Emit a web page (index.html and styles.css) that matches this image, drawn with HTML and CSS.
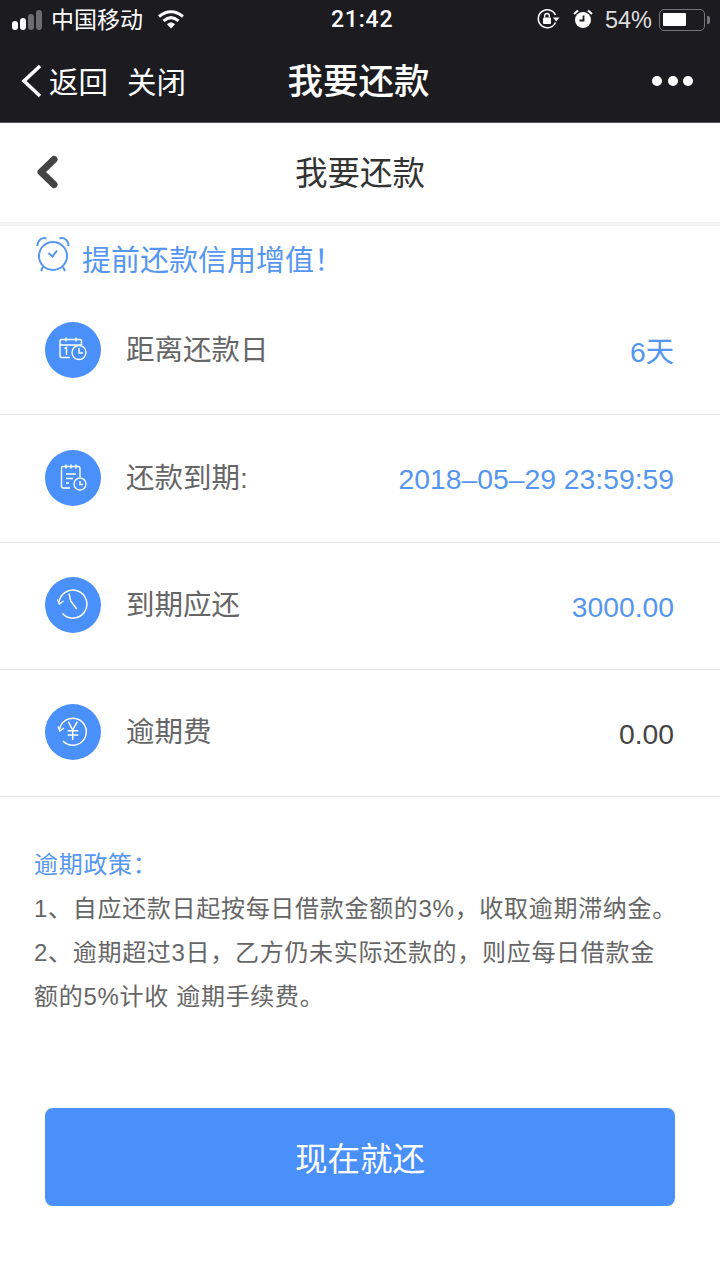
FILE: index.html
```html
<!DOCTYPE html>
<html lang="zh-CN">
<head>
    <meta charset="UTF-8">
    <meta name="viewport" content="width=device-width, initial-scale=1.0">
    <title>我要还款</title>
    <link rel="stylesheet" href="styles.css">
</head>
<body>
    <div class="top-bar">
        <div class="status-bar">
            <div class="status-left">
                <div class="signal">
                    <span class="dot on s1"></span>
                    <span class="dot on s2"></span>
                    <span class="dot s3"></span>
                    <span class="dot s4"></span>
                </div>
                <span class="carrier">中国移动</span>
                <svg class="wifi" width="28" height="20" viewBox="0 0 28 20">
                    <path d="M2 7.5C9.500 1 18.500 1 26 7.500" fill="none" stroke="#fff" stroke-width="3"/>
                    <path d="M6.500 11.800C11.500 7.500 16.500 7.500 21.500 11.800" fill="none" stroke="#fff" stroke-width="3"/>
                    <path d="M10 15.200C12.500 13 15.500 13 18 15.200L14 19.500Z" fill="#fff"/>
                </svg>
            </div>
            <span class="clock">21:42</span>
            <div class="status-right">
                <svg class="lock" width="24" height="22" viewBox="0 0 24 22">
                    <path d="M19.500 14.500A9 9 0 1 1 19.500 7" fill="none" stroke="#fff" stroke-width="1.600"/>
                    <path d="M17 9.500L23.500 9.500L20.200 13.500Z" fill="#fff"/>
                    <rect x="7" y="9.500" width="8" height="6.500" rx="1" fill="#fff"/>
                    <path d="M8.700 9.500V7.800A2.300 2.300 0 0 1 13.300 7.800V9.500" fill="none" stroke="#fff" stroke-width="1.300"/>
                </svg>
                <svg class="alarm" width="20" height="20" viewBox="0 0 20 20">
                    <circle cx="10" cy="11" r="8" fill="#fff"/>
                    <path d="M10.500 6.500V11.500H6.500" fill="none" stroke="#1b1b20" stroke-width="1.800"/>
                    <path d="M1 5L5 1.500M19 5L15 1.500" stroke="#fff" stroke-width="2.200"/>
                </svg>
                <span class="battery-text">54%</span>
                <div class="battery"><span class="battery-fill"></span></div>
                <span class="battery-cap"></span>
            </div>
        </div>
        <div class="nav-bar">
            <div class="nav-left">
                <svg width="24" height="34" viewBox="0 0 24 34">
                    <path d="M20 2L4 17L20 32" fill="none" stroke="#fff" stroke-width="3.600"/>
                </svg>
                <span class="nav-link">返回</span>
                <span class="nav-link nav-close">关闭</span>
            </div>
            <span class="nav-title">我要还款</span>
            <div class="nav-more"><span></span><span></span><span></span></div>
        </div>
    </div>

    <div class="page-header">
        <svg class="back-icon" width="24" height="36" viewBox="0 0 24 36">
            <path d="M19 5.500L6 18L19 30.500" fill="none" stroke="#444" stroke-width="7" stroke-linecap="round" stroke-linejoin="round"/>
        </svg>
        <h1>我要还款</h1>
    </div>

    <div class="tip">
        <svg width="34" height="36" viewBox="0 0 34 36">
            <g fill="none" stroke="#5596f2" stroke-width="2">
                <circle cx="17" cy="20" r="14"/>
                <path d="M1.500 10C1.500 4 6 1 10.500 2.500M32.500 10C32.500 4 28 1 23.500 2.500"/>
                <path d="M7 31L5 35M27 31L29 35"/>
                <path d="M12.500 17L16.500 20.500L21 14.500"/>
            </g>
        </svg>
        <span>提前还款信用增值！</span>
    </div>

    <div class="info-list">
        <div class="info-row">
            <div class="icon-circle">
                <svg width="30" height="30" viewBox="0 0 30 30">
                    <g fill="none" stroke="#fff" stroke-width="1.400">
                        <path d="M12 22.500H3.500A1.500 1.500 0 0 1 2 21V6A1.500 1.500 0 0 1 3.500 4.500H22A1.500 1.500 0 0 1 23.500 6V10"/>
                        <path d="M2 10H23.500M8 2.500V6.500M18 2.500V6.500"/>
                        <path d="M6.500 13.500L8.500 12.500V20"/>
                        <circle cx="21" cy="17.500" r="7"/>
                        <path d="M21 13V18H25"/>
                    </g>
                </svg>
            </div>
            <span class="label">距离还款日</span>
            <span class="value blue">6天</span>
        </div>
        <div class="info-row">
            <div class="icon-circle">
                <svg width="30" height="30" viewBox="0 0 30 30">
                    <g fill="none" stroke="#fff" stroke-width="1.400">
                        <path d="M12 25H5A1.500 1.500 0 0 1 3.500 23.500V5A1.500 1.500 0 0 1 5 3.500H20.500A1.500 1.500 0 0 1 22 5V14"/>
                        <path d="M8 1.500V5.500M13 1.500V5.500M18 1.500V5.500"/>
                        <path d="M8 11H18M8 15.500H15M8 20H11"/>
                        <circle cx="22" cy="21" r="6"/>
                        <path d="M22 18V21.500H25"/>
                    </g>
                </svg>
            </div>
            <span class="label">还款到期:</span>
            <span class="value blue">2018–05–29 23:59:59</span>
        </div>
        <div class="info-row">
            <div class="icon-circle">
                <svg width="32" height="32" viewBox="0 0 32 32">
                    <g fill="none" stroke="#fff" stroke-width="1.500">
                        <path d="M2 13.500A14 14 0 1 1 5.500 24.500"/>
                        <path d="M0.500 10.500L2.300 15L6.500 12" stroke-width="1.300"/>
                        <path d="M12 4.500L13.700 12L19.700 20"/>
                    </g>
                </svg>
            </div>
            <span class="label">到期应还</span>
            <span class="value blue">3000.00</span>
        </div>
        <div class="info-row">
            <div class="icon-circle">
                <svg width="32" height="32" viewBox="0 0 32 32">
                    <g fill="none" stroke="#fff" stroke-width="1.500">
                        <path d="M2.500 13.500A13.500 13.500 0 1 1 6 25"/>
                        <path d="M1 10.500L2.800 15L7 12" stroke-width="1.300"/>
                        <path d="M11.300 5.700L15.700 14L20.300 5.700M15.700 14V24M10.700 14.700H21.300M10.700 19H21.300"/>
                    </g>
                </svg>
            </div>
            <span class="label">逾期费</span>
            <span class="value">0.00</span>
        </div>
    </div>

    <div class="policy">
        <p class="policy-title">逾期政策：</p>
        <p>1、自应还款日起按每日借款金额的3%，收取逾期滞纳金。</p>
        <p>2、逾期超过3日，乙方仍未实际还款的，则应每日借款金额的5%计收 逾期手续费。</p>
    </div>

    <button class="pay-button">现在就还</button>
</body>
</html>
```

FILE: styles.css
```css
* {
    box-sizing: border-box;
}

body {
    margin: 0;
    background-color: #fff;
    font-family: "Liberation Sans", "Noto Sans CJK SC", sans-serif;
    color: #444;
}

.top-bar {
    background-color: #1b1b20;
    color: #fff;
    height: 123px;
    border-bottom: 1px solid #555;
}

.status-bar {
    height: 40px;
    padding: 0 10px 0 12px;
    display: flex;
    align-items: center;
    justify-content: space-between;
    position: relative;
}

.status-left,
.status-right {
    display: flex;
    align-items: center;
}

.signal {
    display: flex;
    align-items: flex-end;
    gap: 2px;
    height: 20px;
    margin-top: -1px;
}

.dot {
    width: 6px;
    background-color: #6b6b70;
    border-radius: 3px;
}

.dot.on {
    background-color: #fff;
}

.s1 { height: 9px; }
.s2 { height: 12px; }
.s3 { height: 16px; }
.s4 { height: 20px; }

.carrier {
    font-size: 23px;
    margin-left: 9px;
    margin-top: -5px;
}

.wifi {
    margin-left: 14px;
    margin-top: -2px;
}

.clock {
    position: absolute;
    left: 331px;
    top: 6px;
    font-family: Roboto, sans-serif;
    font-size: 23px;
    font-weight: 500;
    letter-spacing: 0.800px;
}

.lock {
    margin-top: -2px;
}

.alarm {
    margin-left: 13px;
    margin-top: -2px;
}

.battery-text {
    font-size: 23.500px;
    margin-left: 12px;
    color: #ddd;
}

.battery {
    width: 46px;
    height: 22px;
    margin-left: 7px;
    padding: 3px;
    border: 1.500px solid #777;
    border-radius: 5px;
}

.battery-fill {
    display: block;
    width: 23px;
    height: 13px;
    background-color: #fff;
    border-radius: 1px;
}

.battery-cap {
    width: 3px;
    height: 8px;
    margin-left: 2px;
    background-color: #777;
    border-radius: 0 2px 2px 0;
}

.nav-bar {
    height: 82px;
    padding: 0 27px 0 20px;
    display: flex;
    align-items: center;
    justify-content: space-between;
    position: relative;
}

.nav-left {
    display: flex;
    align-items: center;
}

.nav-link {
    font-size: 29.500px;
    margin: 0 0 3px 5px;
}

.nav-close {
    margin-left: 19px;
}

.nav-title {
    position: absolute;
    left: 0;
    right: 3px;
    top: 13px;
    text-align: center;
    font-size: 35.500px;
    font-weight: 500;
}

.nav-more {
    display: flex;
    gap: 5.500px;
}

.nav-more span {
    width: 10px;
    height: 10px;
    background-color: #fff;
    border-radius: 50%;
}

.page-header {
    height: 103px;
    border-bottom: 4px solid #f2f2f2;
    display: flex;
    align-items: center;
    justify-content: center;
    position: relative;
}

.page-header h1 {
    margin: 0 0 5px;
    font-size: 32.500px;
    font-weight: 400;
    color: #333;
}

.back-icon {
    position: absolute;
    left: 35px;
    top: 31px;
}

.tip {
    height: 62px;
    padding: 10px 0 0 36px;
    display: flex;
    align-items: flex-start;
    gap: 12px;
    color: #5596f2;
    font-size: 29px;
}

.tip span {
    margin-top: 1px;
}

.info-row {
    height: 127.330px;
    padding: 0 46px 1.500px 45px;
    border-bottom: 1px solid #e6e6e6;
    display: flex;
    align-items: center;
}

.icon-circle {
    width: 56px;
    height: 56px;
    background-color: #4a90fb;
    border-radius: 50%;
    display: flex;
    align-items: center;
    justify-content: center;
}

.label {
    margin-left: 25px;
    font-size: 28.500px;
    color: #666;
    margin-top: -5px;
}

.value {
    margin-left: auto;
    font-size: 28.300px;
    line-height: 32px;
    color: #444;
    margin-top: 3px;
}

.value.blue {
    color: #5596f2;
}

.policy {
    padding: 45.670px 42px 0 34px;
    font-size: 24px;
    line-height: 44px;
    letter-spacing: 0.700px;
    color: #666;
}

.policy p {
    margin: 0;
}

.policy-title {
    color: #5596f2;
}

.pay-button {
    display: block;
    width: 630px;
    height: 98px;
    margin: 89px 0 0 45px;
    background-color: #4a90fb;
    color: #fff;
    border: none;
    border-radius: 8px;
    font-family: inherit;
    font-size: 32.500px;
}
```
